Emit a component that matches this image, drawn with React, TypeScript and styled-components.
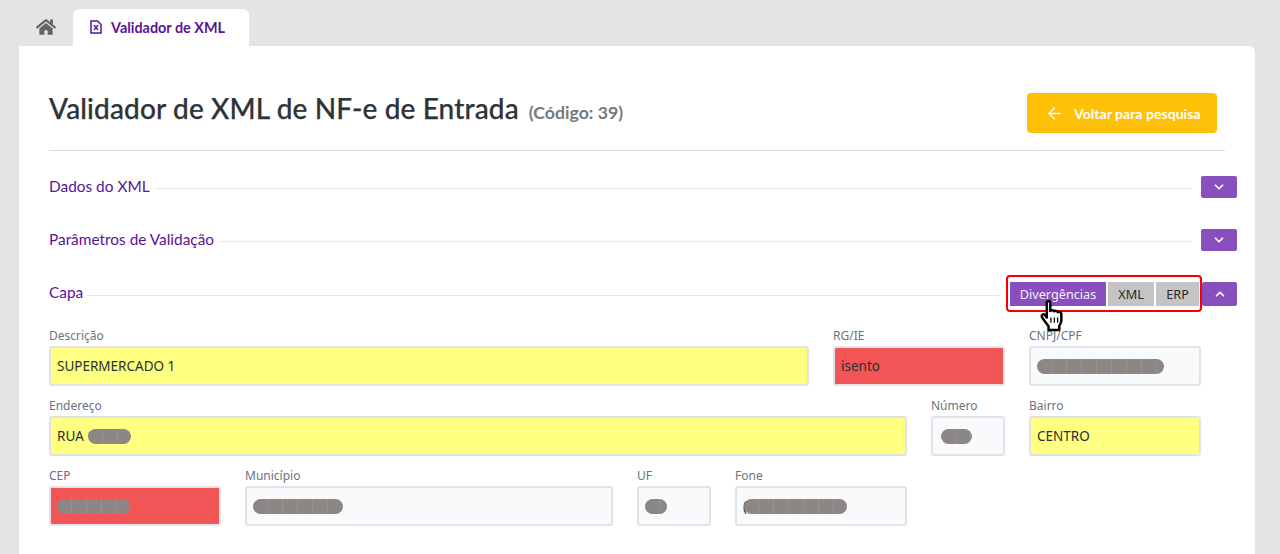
import React from "react";
import styled, { createGlobalStyle } from "styled-components";
import { FaHome } from "react-icons/fa";
import { ArrowLeft, ChevronDown, ChevronUp } from "lucide-react";

const heading = `"Lato", "Noto Sans", sans-serif`;
const body = `"Noto Sans", "Open Sans", sans-serif`;

const Global = createGlobalStyle`
  html, body { margin: 0; padding: 0; height: 554px; overflow: hidden; background: #e4e4e4; }
  * { box-sizing: border-box; }
`;

const Page = styled.div`
  width: 1280px;
  height: 554px;
  padding: 9px 25px 0 19px;
  display: flex;
  flex-direction: column;
  overflow: hidden;
  font-family: ${body};
`;

const TabBar = styled.nav`
  display: flex;
  height: 37px;
  flex: none;
`;

const HomeTab = styled.div`
  width: 54px;
  display: flex;
  align-items: flex-start;
  padding: 8px 0 0 17px;
  color: #656565;
`;

const ActiveTab = styled.div`
  width: 176px;
  background: #fff;
  border-radius: 6px 6px 0 0;
  display: flex;
  align-items: center;
  padding: 0 0 1px 17px;
  gap: 9px;
  color: #5a1496;
  font-family: ${heading};
  font-size: 14.4px;
  font-weight: 700;
`;

const Card = styled.main`
  flex: 1;
  background: #fff;
  border-radius: 0 6px 0 0;
  padding: 0 18px 0 30px;
`;

const Header = styled.header`
  height: 105px;
  width: 1176px;
  border-bottom: 1px solid #dcdcdc;
  display: flex;
  align-items: flex-start;
  justify-content: space-between;
  padding: 47px 8px 0 0;
`;

const Title = styled.h1`
  margin: -1px 0 0;
  font-family: ${heading};
  font-weight: 500;
  font-size: 28px;
  line-height: 33px;
  color: #2f3336;
  letter-spacing: 0.14px;
  -webkit-text-stroke: 0.25px #2f3336;
`;

const Code = styled.small`
  font-size: 17.7px;
  font-weight: 700;
  color: #76797c;
  margin-left: 10px;
  letter-spacing: 0;
  -webkit-text-stroke: 0;
`;

const BackButton = styled.div`
  width: 190px;
  height: 40px;
  background: #ffc107;
  border-radius: 4px;
  color: #fff;
  display: flex;
  align-items: center;
  padding-left: 18px;
  gap: 10px;
  font-family: ${heading};
  font-size: 14.1px;
  font-weight: 700;
`;

const Section = styled.section<{ $top: number }>`
  display: flex;
  align-items: center;
  height: 22px;
  margin-top: ${(p) => p.$top}px;
  width: 1188px;
  gap: 4px;
`;

const SectionTitle = styled.span`
  color: #5a1496;
  font-family: ${heading};
  font-size: 15.4px;
  line-height: 20px;
  margin-top: -2px;
`;

const Rule = styled.div<{ $drop?: number }>`
  flex: 1;
  height: 1px;
  background: #eaeaea;
  margin: ${(p) => p.$drop ?? 2}px 5px 0 0;
`;

const Controls = styled.div`
  position: relative;
  display: flex;
  gap: 2px;
  align-self: flex-start;
`;

const ToggleGroupMark = styled.div`
  position: absolute;
  left: -4px;
  top: -7px;
  width: 196px;
  height: 37px;
  border: 2px solid #f60000;
  border-radius: 4px;
`;

const Segment = styled.div<{ $active?: boolean; $w: number }>`
  width: ${(p) => p.$w}px;
  height: 24px;
  display: flex;
  align-items: center;
  justify-content: center;
  font-size: 12.7px;
  background: ${(p) => (p.$active ? "#8950bd" : "#c4c4c4")};
  color: ${(p) => (p.$active ? "#f3eef8" : "#2a2a2a")};
`;

const Chevron = styled.div`
  width: 36px;
  height: 22px;
  background: #8950bd;
  color: #fff;
  border-radius: 2px;
  display: flex;
  align-items: center;
  justify-content: center;
`;

const ChevronInGroup = styled(Chevron)`
  width: 35px;
  height: 24px;
  margin-left: 1px;
`;

const Pointer = styled.svg`
  position: absolute;
  left: 30px;
  top: 18px;
`;

const Form = styled.div`
  display: grid;
  grid-template-columns: repeat(12, 74px);
  column-gap: 24px;
  row-gap: 11px;
  margin-top: 23px;
`;

const Field = styled.div<{ $span: number }>`
  grid-column: span ${(p) => p.$span};
`;

const Label = styled.label`
  display: block;
  height: 19px;
  padding-top: 1px;
  font-size: 12px;
  line-height: 16px;
  color: #6d7280;
`;

const Input = styled.div<{ $tone?: "yellow" | "red" }>`
  height: 40px;
  border: 2px solid #e2e3ea;
  border-radius: 3px;
  background: ${(p) =>
    p.$tone === "yellow" ? "#ffff80" : p.$tone === "red" ? "#f25555" : "#f9fafc"};
  display: flex;
  align-items: center;
  padding: 0 6px;
  font-size: 13.5px;
  color: #2c2f33;
  white-space: pre;
`;

const Redacted = styled.span<{ $w: number; $x?: number }>`
  display: block;
  width: ${(p) => p.$w}px;
  height: 15px;
  border-radius: 8px;
  margin-left: ${(p) => p.$x ?? 0}px;
  background: repeating-linear-gradient(90deg, #8c8685 0 14px, #98928f 14px 15px);
`;

function DocXIcon() {
  return (
    <svg width="12" height="14" viewBox="0 0 12 14" fill="none" stroke="currentColor" strokeWidth="1.5">
      <path d="M1 1h6.5L11 4.5V13H1z" />
      <path d="M4 5l4 5M8 5l-4 5" strokeWidth="1.4" />
    </svg>
  );
}

export default function App() {
  return (
    <Page>
      <Global />
      <TabBar>
        <HomeTab>
          <FaHome size={20} />
        </HomeTab>
        <ActiveTab>
          <DocXIcon />
          Validador de XML
        </ActiveTab>
      </TabBar>
      <Card>
        <Header>
          <Title>
            Validador de XML de NF-e de Entrada<Code>(Código: 39)</Code>
          </Title>
          <BackButton>
            <ArrowLeft size={19} strokeWidth={1.8} />
            Voltar para pesquisa
          </BackButton>
        </Header>
        <Section $top={25}>
          <SectionTitle>Dados do XML</SectionTitle>
          <Rule />
          <Controls>
            <Chevron>
              <ChevronDown size={14} strokeWidth={3} />
            </Chevron>
          </Controls>
        </Section>
        <Section $top={31}>
          <SectionTitle>Parâmetros de Validação</SectionTitle>
          <Rule />
          <Controls>
            <Chevron>
              <ChevronDown size={14} strokeWidth={3} />
            </Chevron>
          </Controls>
        </Section>
        <Section $top={31}>
          <SectionTitle>Capa</SectionTitle>
          <Rule $drop={4} />
          <Controls>
            <ToggleGroupMark />
            <Segment $active $w={96}>Divergências</Segment>
            <Segment $w={46}>XML</Segment>
            <Segment $w={43}>ERP</Segment>
            <ChevronInGroup>
              <ChevronUp size={14} strokeWidth={3} />
            </ChevronInGroup>
            <Pointer width="27" height="32" viewBox="0 0 26 31">
              <path
                d="M6.5 2.4c0-1.7 3.4-1.7 3.4 0v8.2c1-.9 3-.9 3.6.4 1-.9 3-.6 3.5.8 1.2-.7 3.6 0 3.6 1.6v6.2c0 2.3-.8 3.8-2 5.3V29H8.2v-3.6C6.4 22.8 3.2 19 1.9 16.6c-1.1-2.1 1.2-3.6 2.9-2l1.7 2.4z"
                fill="#fff"
                stroke="#000"
                strokeWidth="2.4"
                strokeLinejoin="round"
              />
              <path d="M10.5 17v5M13.8 17v5M17 17v5" stroke="#000" strokeWidth="1.2" />
            </Pointer>
          </Controls>
        </Section>
        <Form>
          <Field $span={8}>
            <Label>Descrição</Label>
            <Input $tone="yellow">SUPERMERCADO 1</Input>
          </Field>
          <Field $span={2}>
            <Label>RG/IE</Label>
            <Input $tone="red">isento</Input>
          </Field>
          <Field $span={2}>
            <Label>CNPJ/CPF</Label>
            <Input><Redacted $w={127} /></Input>
          </Field>
          <Field $span={9}>
            <Label>Endereço</Label>
            <Input $tone="yellow">RUA 1<Redacted $w={43} $x={-7} /></Input>
          </Field>
          <Field $span={1}>
            <Label>Número</Label>
            <Input><Redacted $w={31} $x={2} /></Input>
          </Field>
          <Field $span={2}>
            <Label>Bairro</Label>
            <Input $tone="yellow">CENTRO</Input>
          </Field>
          <Field $span={2}>
            <Label>CEP</Label>
            <Input $tone="red"><Redacted $w={73} /></Input>
          </Field>
          <Field $span={4}>
            <Label>Município</Label>
            <Input><Redacted $w={90} /></Input>
          </Field>
          <Field $span={1}>
            <Label>UF</Label>
            <Input><Redacted $w={22} /></Input>
          </Field>
          <Field $span={2}>
            <Label>Fone</Label>
            <Input>(<Redacted $w={103} $x={-3} /></Input>
          </Field>
        </Form>
      </Card>
    </Page>
  );
}
